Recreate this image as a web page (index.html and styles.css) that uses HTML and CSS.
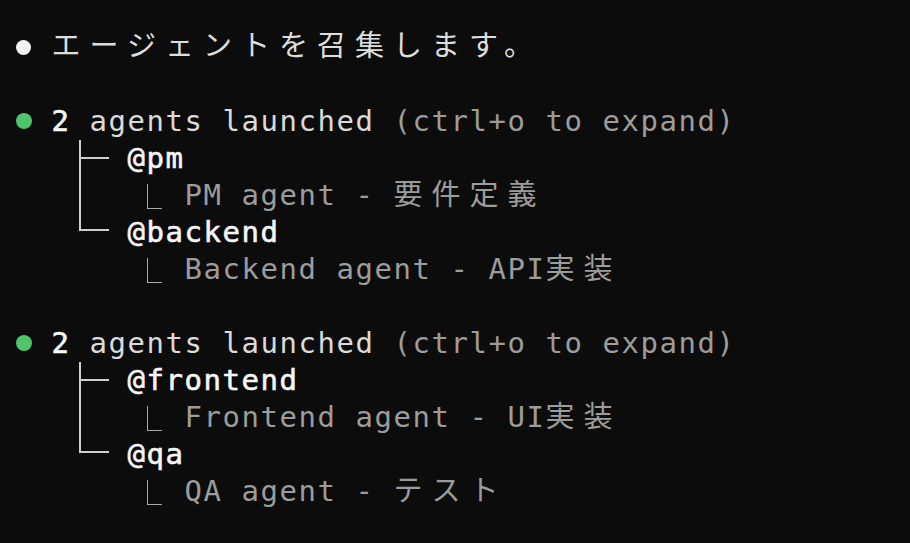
FILE: index.html
```html
<!DOCTYPE html>
<html lang="ja">
<head>
<meta charset="utf-8">
<title>Terminal</title>
<link rel="stylesheet" href="styles.css">
</head>
<body>
<main class="term">
  <div class="row"><span class="lead"><span class="dot dot-white"></span></span><span class="ja ja-bright">エージェントを召集します。</span></div>
  <div class="row"></div>
  <div class="row"><span class="lead"><span class="dot dot-green"></span></span><b class="strong">2</b><span class="plain"> agents launched </span><span class="dim">(ctrl+o to expand)</span></div>
  <div class="row"><span class="indent"></span><span class="tree tee"></span><b class="strong">@pm</b></div>
  <div class="row"><span class="indent"></span><span class="pipe"></span><span class="hook"></span><span class="dim">PM agent - <span class="ja">要件定義</span></span></div>
  <div class="row"><span class="indent"></span><span class="tree elbow"></span><b class="strong">@backend</b></div>
  <div class="row"><span class="indent"></span><span class="blank"></span><span class="hook"></span><span class="dim">Backend agent - API<span class="ja">実装</span></span></div>
  <div class="row"></div>
  <div class="row"><span class="lead"><span class="dot dot-green"></span></span><b class="strong">2</b><span class="plain"> agents launched </span><span class="dim">(ctrl+o to expand)</span></div>
  <div class="row"><span class="indent"></span><span class="tree tee"></span><b class="strong">@frontend</b></div>
  <div class="row"><span class="indent"></span><span class="pipe"></span><span class="hook"></span><span class="dim">Frontend agent - UI<span class="ja">実装</span></span></div>
  <div class="row"><span class="indent"></span><span class="tree elbow"></span><b class="strong">@qa</b></div>
  <div class="row"><span class="indent"></span><span class="blank"></span><span class="hook"></span><span class="dim">QA agent - <span class="ja">テスト</span></span></div>
</main>
</body>
</html>
```
FILE: styles.css
```css
:root {
  --cw: 19px;
  --rh: 37px;
}

html {
  overflow: hidden;
  background: #0c0c0c;
}

body {
  margin: 0;
  background: #0c0c0c;
  color: #dcdcdc;
  font-family: "DejaVu Sans Mono", "Noto Sans CJK JP", monospace;
  font-size: 29px;
  letter-spacing: calc(var(--cw) - 29px * 0.602);
}

.term {
  padding: 29px 0 0 13.5px;
}

.row {
  display: flex;
  height: var(--rh);
  line-height: var(--rh);
  white-space: pre;
}

.lead {
  width: calc(var(--cw) * 2);
  flex: none;
  display: flex;
  align-items: center;
}

.dot {
  width: 15px;
  height: 15px;
  border-radius: 50%;
  margin: -1px 0 0 2.5px;
}

.dot-white { background: #f2f2f2; }
.dot-green { background: #4ec46b; width: 16px; height: 16px; }

.strong {
  font-weight: normal;
  color: #f6f6f6;
  -webkit-text-stroke: 0.6px #f6f6f6;
}

.plain { color: #dadada; }

.dim { color: #9c9c9c; }

.ja {
  font-family: "Noto Sans CJK JP", sans-serif;
  font-size: 29px;
  letter-spacing: calc(var(--cw) * 2 - 29px);
  line-height: 1;
}

.ja-bright { color: #dedede; }

.indent {
  width: calc(var(--cw) * 3);
  flex: none;
}

.tree, .pipe, .blank {
  position: relative;
  flex: none;
}

.tree { width: calc(var(--cw) * 3); }
.pipe, .blank { width: calc(var(--cw) * 4); }

.tree::before, .pipe::before {
  content: "";
  position: absolute;
  left: calc(var(--cw) / 2 - 1px);
  top: 0;
  width: 2px;
  background: #cfcfcf;
}

.tee::before, .pipe::before { bottom: 0; }
.elbow::before { height: calc(50% - 3px); }

.tree::after {
  content: "";
  position: absolute;
  left: calc(var(--cw) / 2 - 1px);
  width: calc(var(--cw) * 1.5 + 1px);
  height: 2px;
  background: #cfcfcf;
}

.tee::after { top: calc(50% - 1.5px); }
.elbow::after { top: calc(50% - 4px); }

.hook {
  position: relative;
  width: calc(var(--cw) * 2);
  flex: none;
}

.hook::before {
  content: "";
  position: absolute;
  left: 0;
  top: 6.5px;
  height: 24px;
  width: 14px;
  border-left: 1.5px solid #a8a8a8;
  border-bottom: 1.5px solid #a8a8a8;
}
```
